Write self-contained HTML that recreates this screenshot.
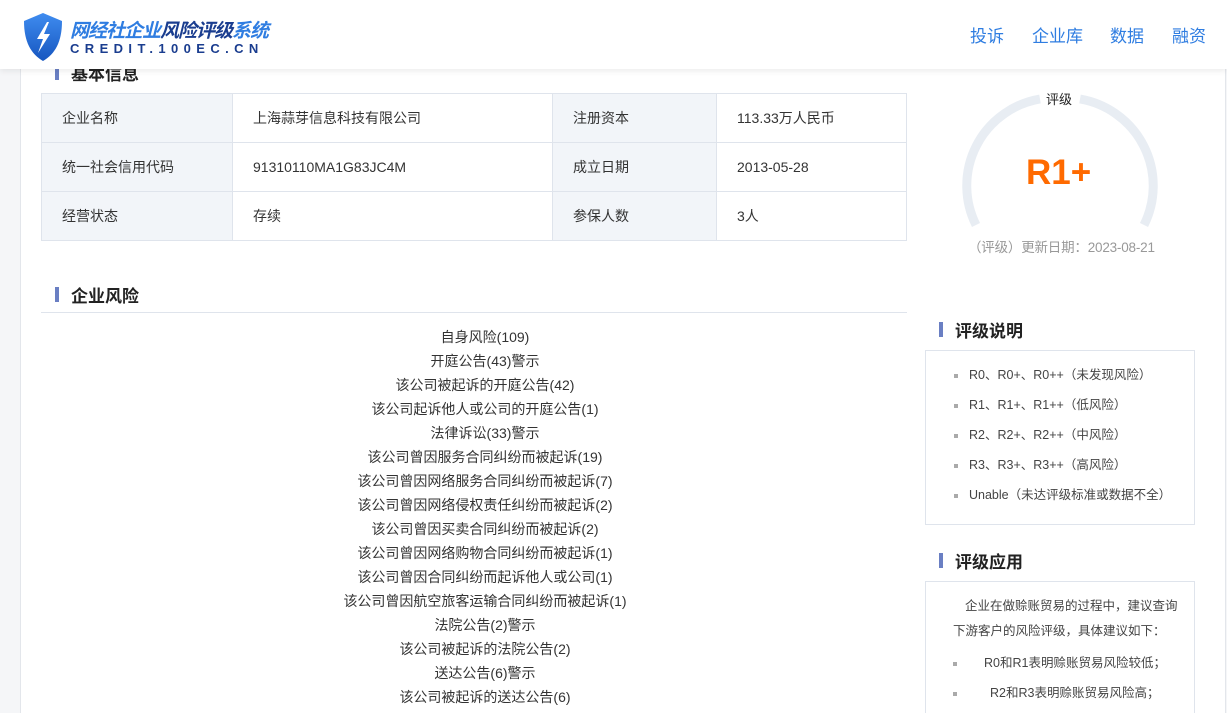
<!DOCTYPE html>
<html><head><meta charset="utf-8"><style>
*{margin:0;padding:0;box-sizing:border-box}
html,body{width:1227px;height:713px;overflow:hidden}
body{background:#f5f6f8;font-family:"Liberation Sans","Noto Sans CJK SC",sans-serif;color:#333;position:relative}
.main{position:absolute;left:20px;top:0;width:1206px;height:713px;background:#fff;border-left:1px solid #e3e6eb;border-right:1px solid #e3e6eb}
.hdr{position:absolute;left:0;top:0;width:1227px;height:69px;background:#fff;box-shadow:0 2px 6px rgba(0,0,0,.08);z-index:5}
.nav{position:absolute;top:22px;font-size:17px;color:#2f7de1}
.ttl{position:absolute;font-size:17px;font-weight:bold;color:#222;padding-left:16px}
.ttl:before{content:"";position:absolute;left:0;top:5px;width:4px;height:15px;background:#6a7fc3}
table{position:absolute;left:41px;top:93px;border-collapse:collapse;font-size:14px}
td{border:1px solid #dfe4ec;height:49px;padding:0 0 0 20px}
td.l{background:#f2f5f9}
.risk{position:absolute;left:52px;top:325px;width:866px;text-align:center;font-size:14px;line-height:24px;color:#333}
.box{position:absolute;left:925px;width:270px;border:1px solid #dfe4ec;font-size:12.5px;color:#444;background:#fff}
.box li{list-style:none;position:relative;height:30px;line-height:30px}
.box li:before{content:"";position:absolute;left:0;width:4px;height:4px;background:#aaa;top:14px}
</style></head><body>
<div class="main"></div>
<div class="hdr">
<svg style="position:absolute;left:22px;top:12px" width="42" height="50" viewBox="0 0 42 50"><defs><linearGradient id="g" x1="0" y1="0" x2="0" y2="1"><stop offset="0" stop-color="#3f8cf0"/><stop offset="1" stop-color="#1656c0"/></linearGradient></defs><path d="M21 1 L40 9 C40 30 33 42 21 49 C9 42 2 30 2 9 Z" fill="url(#g)"/><path d="M25 10 L15 27 L21 27 L16 41 L28 22 L22 22 L27 10 Z" fill="#fff"/></svg>
<div style="position:absolute;left:70px;top:16px;font-size:19px;font-weight:bold;font-style:italic;color:#2f7de1;letter-spacing:-1px">网经社企业<span style="color:#1a3d8f">风险评级</span>系统</div>
<div style="position:absolute;left:70px;top:41px;font-size:13px;color:#1a3d8f;letter-spacing:5.4px;font-weight:bold">CREDIT.100EC.CN</div>
<div class="nav" style="left:970px">投诉</div><div class="nav" style="left:1032px">企业库</div><div class="nav" style="left:1110px">数据</div><div class="nav" style="left:1172px">融资</div>
</div>
<div class="ttl" style="left:55px;top:60px">基本信息</div>
<table>
<tr><td class="l" style="width:191px">企业名称</td><td style="width:320px">上海蒜芽信息科技有限公司</td><td class="l" style="width:164px">注册资本</td><td style="width:190px">113.33万人民币</td></tr>
<tr><td class="l">统一社会信用代码</td><td>91310110MA1G83JC4M</td><td class="l">成立日期</td><td>2013-05-28</td></tr>
<tr><td class="l">经营状态</td><td>存续</td><td class="l">参保人数</td><td>3人</td></tr>
</table>
<div class="ttl" style="left:55px;top:282px">企业风险</div>
<div style="position:absolute;left:41px;top:312px;width:866px;height:1px;background:#dfe4ec"></div>
<div class="risk">自身风险(109)<br>开庭公告(43)警示<br>该公司被起诉的开庭公告(42)<br>该公司起诉他人或公司的开庭公告(1)<br>法律诉讼(33)警示<br>该公司曾因服务合同纠纷而被起诉(19)<br>该公司曾因网络服务合同纠纷而被起诉(7)<br>该公司曾因网络侵权责任纠纷而被起诉(2)<br>该公司曾因买卖合同纠纷而被起诉(2)<br>该公司曾因网络购物合同纠纷而被起诉(1)<br>该公司曾因合同纠纷而起诉他人或公司(1)<br>该公司曾因航空旅客运输合同纠纷而被起诉(1)<br>法院公告(2)警示<br>该公司被起诉的法院公告(2)<br>送达公告(6)警示<br>该公司被起诉的送达公告(6)</div>
<svg style="position:absolute;left:960px;top:85px" width="200" height="145" viewBox="960 85 200 145"><path d="M976 225 A88 88 0 0 1 1040 99 M1080 99 A88 88 0 0 1 1144 225" fill="none" stroke="#e8edf3" stroke-width="9"/></svg>
<div style="position:absolute;left:1046px;top:89px;font-size:13px;color:#222">评级</div>
<div style="position:absolute;left:1026px;top:153px;font-size:35px;font-weight:bold;color:#ff6a00">R1+</div>
<div style="position:absolute;left:968px;top:236px;font-size:13.5px;color:#999;letter-spacing:-0.2px">（评级）更新日期：2023-08-21</div>
<div class="ttl" style="left:939px;top:317px">评级说明</div>
<div class="box" style="top:350px;height:175px;padding:9px 0 0 28px"><ul>
<li style="padding-left:15px">R0、R0+、R0++（未发现风险）</li><li style="padding-left:15px">R1、R1+、R1++（低风险）</li><li style="padding-left:15px">R2、R2+、R2++（中风险）</li><li style="padding-left:15px">R3、R3+、R3++（高风险）</li><li style="padding-left:15px">Unable（未达评级标准或数据不全）</li></ul></div>
<div class="ttl" style="left:939px;top:548px">评级应用</div>
<div class="box" style="top:581px;height:140px;padding:12px 0 0 27px">
<div style="line-height:24px;padding-left:12px">企业在做赊账贸易的过程中，建议查询</div>
<div style="line-height:24px;margin-top:1px">下游客户的风险评级，具体建议如下：</div>
<ul style="margin-top:5px"><li style="padding-left:31px">R0和R1表明赊账贸易风险较低；</li><li style="padding-left:37px">R2和R3表明赊账贸易风险高；</li></ul></div>
</body></html>
